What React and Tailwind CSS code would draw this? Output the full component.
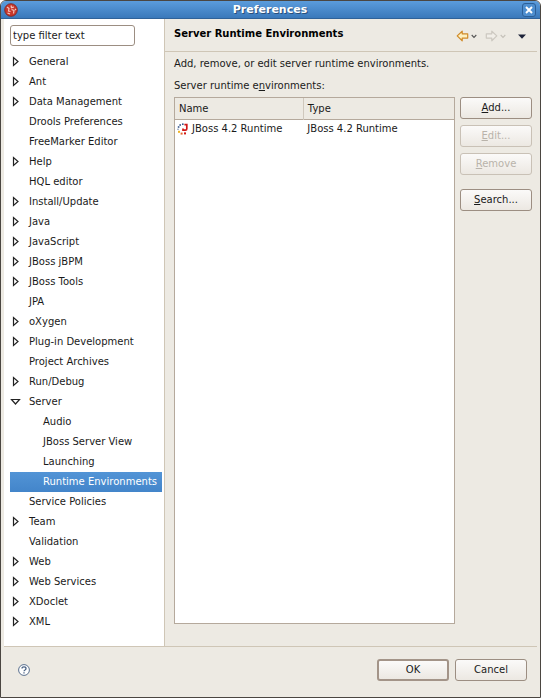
import React from "react";

const treeItems = [
  { label: "General", state: "closed" },
  { label: "Ant", state: "closed" },
  { label: "Data Management", state: "closed" },
  { label: "Drools Preferences" },
  { label: "FreeMarker Editor" },
  { label: "Help", state: "closed" },
  { label: "HQL editor" },
  { label: "Install/Update", state: "closed" },
  { label: "Java", state: "closed" },
  { label: "JavaScript", state: "closed" },
  { label: "JBoss jBPM", state: "closed" },
  { label: "JBoss Tools", state: "closed" },
  { label: "JPA" },
  { label: "oXygen", state: "closed" },
  { label: "Plug-in Development", state: "closed" },
  { label: "Project Archives" },
  { label: "Run/Debug", state: "closed" },
  {
    label: "Server",
    state: "open",
    children: ["Audio", "JBoss Server View", "Launching", "Runtime Environments"],
  },
  { label: "Service Policies" },
  { label: "Team", state: "closed" },
  { label: "Validation" },
  { label: "Web", state: "closed" },
  { label: "Web Services", state: "closed" },
  { label: "XDoclet", state: "closed" },
  { label: "XML", state: "closed" },
];

const selected = "Runtime Environments";

function Expander({ state }) {
  return (
    <svg width="12" height="12" viewBox="0 0 12 12" fill="#fff" stroke="#222" strokeWidth="1.2">
      {state === "closed" && <path d="M3.5 1.5v8l4.5-4z" />}
      {state === "open" && <path d="M1.5 3.5h8l-4 4.5z" />}
    </svg>
  );
}

function TreeItem({ item }) {
  return (
    <li>
      <div className="flex h-5 items-center gap-[7px]">
        <Expander state={item.state} />
        <span>{item.label}</span>
      </div>
      {item.children && (
        <ul>
          {item.children.map((child) => (
            <li
              key={child}
              className={
                child === selected
                  ? "flex h-5 items-center bg-linear-to-b from-[#5294d6] to-[#4385ca] pl-[33px] text-white"
                  : "flex h-5 items-center pl-[33px]"
              }
            >
              {child}
            </li>
          ))}
        </ul>
      )}
    </li>
  );
}

function Button({ children, disabled, primary }) {
  let look = "border border-[#9c8e82] text-[#1a1a1a]";
  if (disabled) look = "border border-[#c9c1b6] text-[#b9b3aa]";
  if (primary) look = "border-2 border-[#a39488] text-[#1a1a1a]";
  return (
    <button
      type="button"
      disabled={disabled}
      className={`flex h-[22px] w-[72px] items-center justify-center rounded-[3px] bg-linear-to-b from-[#fbfaf9] to-[#ece8e2] ${look}`}
    >
      <span>{children}</span>
    </button>
  );
}

function AppIcon() {
  return (
    <svg width="14" height="14" viewBox="0 0 14 14">
      <circle cx="7" cy="7" r="6.3" fill="#c8382c" stroke="#7f211b" strokeWidth="0.8" />
      <path
        d="M3 4l2 1.5L4.5 8l2 .5M7 2.5l.5 2.2L10 4M7.5 6.5l2.5 1-.5 3M3.5 10l2.5 1M11 6l1 1"
        fill="none"
        stroke="#f3c7bf"
        strokeWidth="1.2"
      />
    </svg>
  );
}

function JBossIcon() {
  return (
    <svg width="12" height="12" viewBox="0 0 12 12">
      <g fill="#35558a">
        <rect x="2.4" y="1.2" width="1.6" height="1.6" />
        <rect x="5" y="0.4" width="1.6" height="1.6" />
        <rect x="0.8" y="3.2" width="1.6" height="1.6" />
      </g>
      <rect x="0.3" y="5.6" width="1.4" height="1.4" fill="#8a9bb5" />
      <rect x="1" y="7.8" width="2" height="2" fill="#f0b323" />
      <rect x="3.6" y="9.6" width="2" height="2" fill="#e8642a" />
      <rect x="7" y="9.4" width="2" height="2" fill="#d01818" />
      <path d="M7.4 1.6h2.4v4.2q0 1.4-1.4 1.4H6V5.6" fill="none" stroke="#d01818" strokeWidth="1.7" />
    </svg>
  );
}

function NavArrow({ fill, stroke, flip }) {
  return (
    <svg width="13" height="12" viewBox="0 0 13 12">
      <path
        d={
          flip
            ? "M11.8 5.9L6.8 1.2v2.6H1.3v4.3h5.5v2.7z"
            : "M1.2 5.9l5-4.7v2.6h5.5v4.3H6.2v2.7z"
        }
        fill={fill}
        stroke={stroke}
        strokeWidth="1.2"
        strokeLinejoin="round"
      />
    </svg>
  );
}

function Chevron({ color }) {
  return (
    <svg width="6" height="5" viewBox="0 0 6 5" fill="none" stroke={color} strokeWidth="1.1">
      <path d="M.7 1L3 3.4 5.3 1" />
    </svg>
  );
}

export default function App() {
  return (
    <div className="flex min-h-screen flex-col rounded-t-md border border-[#4b4641] bg-[#edeae3] font-['DejaVu_Sans',sans-serif] text-[10px] leading-[14px] text-[#1a1a1a]">
      {/* title bar */}
      <header className="flex h-[18px] items-center rounded-t-[5px] border-b border-[#2f6299] bg-linear-to-b from-[#5b9cdc] to-[#3a79bb] pr-1 pl-[3px]">
        <AppIcon />
        <h1 className="flex-1 text-center text-[11px] font-bold text-white [text-shadow:1px_1px_0_#2a4f7a]">
          Preferences
        </h1>
        <button
          type="button"
          aria-label="Close"
          className="flex size-[14px] items-center justify-center rounded-[3px] border border-[#2c5f97] bg-[#4d8ecf]"
        >
          <svg width="8" height="8" viewBox="0 0 8 8" stroke="#fff" strokeWidth="1.9">
            <path d="M1 1l6 6M7 1L1 7" />
          </svg>
        </button>
      </header>

      <div className="flex flex-1 flex-col px-[3px]">
        <main className="flex flex-1 border-b border-[#cfc6b6]">
          <nav className="w-[161px] shrink-0 border-r border-[#cfc6b6] bg-white pt-1.5 pr-0.5 pb-3 pl-1.5">
            <input
              type="text"
              aria-label="type filter text"
              defaultValue="type filter text"
              className="block h-[21px] w-[125px] rounded-[3px] border border-[#9c8e82] bg-white px-0.5"
            />
            <ul className="mt-1.5 whitespace-nowrap">
              {treeItems.map((item) => (
                <TreeItem key={item.label} item={item} />
              ))}
            </ul>
          </nav>

          <section className="flex min-w-0 flex-1 flex-col">
            <div className="flex h-[33px] items-center justify-between border-b border-[#cfc6b6] pr-[11px] pb-0.5 pl-[9px]">
              <h2 className="font-bold text-black">Server Runtime Environments</h2>
              <div className="flex items-center gap-3 pt-1">
                <button type="button" aria-label="Back" className="flex items-center gap-0.5">
                  <NavArrow fill="#fdf0c0" stroke="#d08a28" />
                  <Chevron color="#555" />
                </button>
                <button type="button" aria-label="Forward" disabled className="-ml-1 flex items-center gap-0.5">
                  <NavArrow fill="#f1eee8" stroke="#ccc8c0" flip />
                  <Chevron color="#c4c0b8" />
                </button>
                <button type="button" aria-label="Menu">
                  <svg width="8" height="5" viewBox="0 0 8 5">
                    <path d="M0 .5h8L4 4.8z" fill="#1c2238" />
                  </svg>
                </button>
              </div>
            </div>

            <div className="flex flex-1 flex-col pt-[5px] pr-[5px] pb-[22px] pl-[9px]">
              <p className="mb-2">Add, remove, or edit server runtime environments.</p>
              <p className="mb-1">
                Server runtime e<u>n</u>vironments:
              </p>
              <div className="flex flex-1 gap-[5px]">
                <div className="min-w-0 flex-1 border border-[#b5a99c] bg-white">
                  <table className="w-full table-fixed border-collapse text-left">
                    <thead>
                      <tr className="h-[21px] border-b border-[#b5a99c] bg-[#edeae3]">
                        <th className="w-[46%] border-r border-[#cfc8bd] pt-0.5 pl-1 font-normal">Name</th>
                        <th className="pt-0.5 pl-1 font-normal">Type</th>
                      </tr>
                    </thead>
                    <tbody>
                      <tr className="h-5">
                        <td className="pl-0.5">
                          <span className="flex items-center gap-[3px] whitespace-nowrap">
                            <JBossIcon />
                            JBoss 4.2 Runtime
                          </span>
                        </td>
                        <td className="pl-1">JBoss 4.2 Runtime</td>
                      </tr>
                    </tbody>
                  </table>
                </div>
                <div className="flex flex-col gap-1.5">
                  <Button>
                    <u>A</u>dd...
                  </Button>
                  <Button disabled>
                    <u>E</u>dit...
                  </Button>
                  <Button disabled>
                    <u>R</u>emove
                  </Button>
                  <div className="pt-2">
                    <Button>
                      <u>S</u>earch...
                    </Button>
                  </div>
                </div>
              </div>
            </div>
          </section>
        </main>

        <footer className="flex items-center justify-between pt-3 pr-2.5 pb-4 pl-3.5">
          <button type="button" aria-label="Help">
            <svg width="12" height="12" viewBox="0 0 12 12" fill="none" stroke="#4a6284">
              <circle cx="6" cy="6" r="5.4" fill="#fff" strokeWidth="0.9" />
              <path d="M4 4.6q0-1.8 2-1.8t2 1.6q0 1-1 1.6-.9.5-.9 1.2M6 8.2v1.3" strokeWidth="1.3" />
            </svg>
          </button>
          <div className="flex gap-1.5">
            <Button primary>OK</Button>
            <Button>Cancel</Button>
          </div>
        </footer>
      </div>
    </div>
  );
}
